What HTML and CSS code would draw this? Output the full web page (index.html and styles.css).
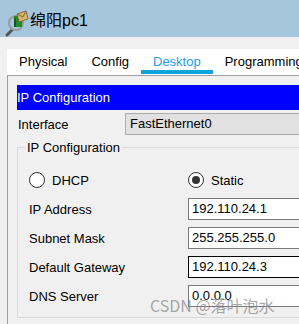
FILE: index.html
```html
<!DOCTYPE html>
<html lang="zh">
<head>
  <meta charset="UTF-8" />
  <title>绵阳pc1</title>
  <link rel="stylesheet" href="styles.css">
</head>
<body>
  <div class="titlebar">
    <svg class="app-icon" width="24" height="24" viewBox="0 0 24 24">
      <path d="M7 22 L2 27" stroke="#555" stroke-width="3" stroke-linecap="round"/>
      <circle cx="11" cy="15" r="7" fill="none" stroke="#9a9a9a" stroke-width="2"/>
      <rect x="9" y="8" width="8" height="11" fill="#1f8a2e"/>
      <path d="M9 9 L11 11 L11 19 L9 19 Z" fill="#0f5a1a"/>
      <path d="M12 6 L21 3 L23 11 L14 14 Z" fill="#d9b46a" stroke="#7a5a20" stroke-width="0.8"/>
      <path d="M12 6 L18 9 L21 3" fill="none" stroke="#7a5a20" stroke-width="0.8"/>
    </svg>
    <span class="title">绵阳pc1</span>
  </div>

  <div class="window">
    <div class="tabs">
      <div class="tab">Physical</div>
      <div class="tab">Config</div>
      <div class="tab active">Desktop</div>
      <div class="tab">Programming</div>
    </div>

    <div class="panel">
      <div class="panel-title">IP Configuration</div>

      <div class="iface-row">
        <span>Interface</span>
        <div class="select">FastEthernet0</div>
      </div>

      <fieldset class="group">
        <legend>IP Configuration</legend>

        <div class="row radios">
          <label class="radio"><span class="dot"></span>DHCP</label>
          <label class="radio"><span class="dot checked"></span>Static</label>
        </div>
        <div class="row">
          <span>IP Address</span>
          <div class="field">192.110.24.1</div>
        </div>
        <div class="row">
          <span>Subnet Mask</span>
          <div class="field">255.255.255.0</div>
        </div>
        <div class="row">
          <span>Default Gateway</span>
          <div class="field focus">192.110.24.3</div>
        </div>
        <div class="row">
          <span>DNS Server</span>
          <div class="field">0.0.0.0</div>
        </div>
      </fieldset>
    </div>
  </div>

  <div class="watermark">CSDN @落叶泡水</div>
</body>
</html>
```

FILE: styles.css
```css
* {
  box-sizing: border-box;
}

body {
  margin: 0;
  width: 299px;
  height: 324px;
  overflow: hidden;
  background-color: #f0f0f0;
  font-family: 'Liberation Sans', Arial, sans-serif;
  font-size: 13px;
  color: #000;
  position: relative;
}

.titlebar {
  height: 37px;
  background-color: #a5c6dc;
  display: flex;
  align-items: center;
  padding-left: 5px;
  gap: 1px;
}

.app-icon {
  overflow: visible;
  margin-top: 3px;
}

.title {
  font-family: 'Liberation Sans', 'Noto Sans CJK SC', sans-serif;
  font-size: 16px;
  color: #000;
}

.window {
  width: 440px;
  padding: 12px 0 0 7px;
}

.tabs {
  display: flex;
  height: 27px;
  background-color: #fff;
  border-bottom: 1px solid #a0a0a0;
}

.tab {
  padding: 5px 12px 0;
  height: 26px;
}

.tab.active {
  color: #1ba1e2;
  box-shadow: inset 0 -1px 0 #fff, inset 0 -5px 0 #0ea5dd;
}

.panel {
  border-left: 1px solid #a0a0a0;
  padding: 9px 0 0 9px;
  height: 260px;
}

.panel-title {
  height: 25px;
  line-height: 25px;
  background-color: #0000ff;
  color: #fff;
}

.iface-row {
  display: grid;
  grid-template-columns: 107px 1fr;
  align-items: center;
  margin-top: 3px;
  padding-left: 1px;
}

.select {
  height: 22px;
  line-height: 20px;
  background-color: #e1e1e1;
  border: 1px solid #adadad;
  padding-left: 4px;
}

.group {
  margin: 5px 0 0 0;
  padding: 0 0 10px 11px;
  border: 1px solid #dadada;
  min-width: 0;
}

.group legend {
  padding: 0 2px;
  margin-left: -4px;
}

.row {
  display: grid;
  grid-template-columns: 159px 1fr;
  align-items: center;
  margin-top: 7px;
}

.radios {
  margin-top: 17px;
  margin-bottom: 10px;
}

.radio {
  display: flex;
  align-items: center;
  gap: 7px;
  height: 16px;
}

.dot {
  width: 16px;
  height: 16px;
  border: 1px solid #333;
  border-radius: 50%;
  background-color: #fff;
  display: flex;
  align-items: center;
  justify-content: center;
}

.dot.checked::after {
  content: '';
  width: 8px;
  height: 8px;
  border-radius: 50%;
  background-color: #333;
}

.field {
  height: 22px;
  line-height: 20px;
  background-color: #fff;
  border: 1px solid #7a7a7a;
  padding-left: 3px;
}

.field.focus {
  border-color: #000;
}

.watermark {
  position: absolute;
  left: 150px;
  top: 295px;
  font-family: 'Noto Sans CJK SC', sans-serif;
  font-size: 16px;
  line-height: 20px;
  color: rgba(130, 130, 130, 0.7);
}
```
